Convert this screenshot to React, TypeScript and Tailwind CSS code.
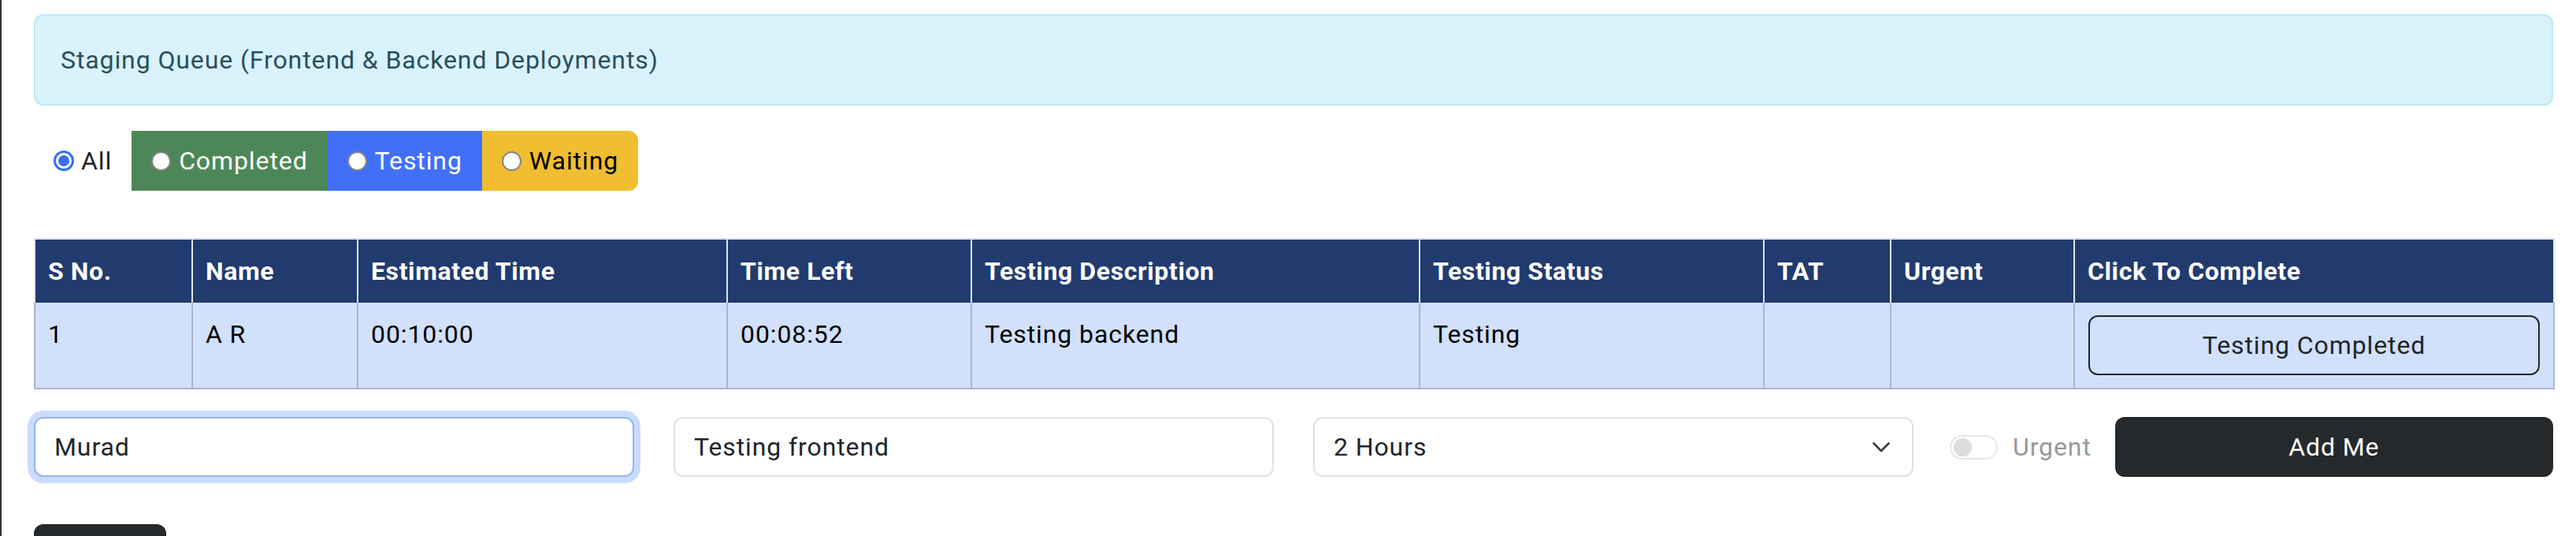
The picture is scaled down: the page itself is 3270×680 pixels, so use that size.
import React from "react";

const columns = [
  { title: "S No.", w: "w-[200px]" },
  { title: "Name", w: "w-[210px]" },
  { title: "Estimated Time", w: "w-[469px]" },
  { title: "Time Left", w: "w-[310px]" },
  { title: "Testing Description", w: "w-[569px]" },
  { title: "Testing Status", w: "w-[437px]" },
  { title: "TAT", w: "w-[161px]" },
  { title: "Urgent", w: "w-[233px]" },
  { title: "Click To Complete", w: "w-[609px]" },
];

const row = ["1", "A R", "00:10:00", "00:08:52", "Testing backend", "Testing", "", ""];

const Radio = ({ checked }: { checked?: boolean }) =>
  checked ? (
    <span className="flex size-[26px] shrink-0 items-center justify-center rounded-full border-[3px] border-[#3b6ef6] bg-white">
      <span className="size-[14px] rounded-full bg-[#3b6ef6]" />
    </span>
  ) : (
    <span className="size-[25px] shrink-0 rounded-full border-2 border-[#858585] bg-white" />
  );

const filters = [
  { label: "Completed", cls: "bg-[#4e8757] text-white" },
  { label: "Testing", cls: "bg-[#4170f7] text-white" },
  { label: "Waiting", cls: "bg-[#f0be2f] text-black rounded-r-[12px]" },
];

export default function App() {
  return (
    <div className="h-screen overflow-hidden border-l-2 border-[#333333] bg-white pl-[41px] pr-[29px] pt-[18px] font-[family-name:Roboto,sans-serif] text-[32px] leading-[48px] tracking-[0.9px] text-[#212529]">
      <div className="rounded-[12px] border-2 border-[#b9e9f7] bg-[#d9f2fb] px-[32px] py-[32px] text-[#2a4f5b]">
        Staging Queue (Frontend &amp; Backend Deployments)
      </div>

      <div className="mt-[32px] flex">
        <label className="flex h-[76px] items-center gap-[9px] px-[25px]">
          <Radio checked />
          All
        </label>
        {filters.map((f) => (
          <label
            key={f.label}
            className={`flex h-[76px] items-center gap-[10px] px-[25px] ${f.cls}`}
          >
            <Radio />
            {f.label}
          </label>
        ))}
      </div>

      <table className="mt-[60px] w-full table-fixed border-collapse border-t-2 border-[#dee2e6]">
        <thead>
          <tr className="bg-[#223b6e] text-white">
            {columns.map((c) => (
              <th
                key={c.title}
                className={`${c.w} border-x-2 border-[#dfe3ea] px-[16px] py-[16px] text-left font-bold tracking-[0.6px]`}
              >
                {c.title}
              </th>
            ))}
          </tr>
        </thead>
        <tbody>
          <tr className="bg-[#d1e0fb] text-black">
            {row.map((v, i) => (
              <td
                key={i}
                className="border-x-2 border-b-2 border-[#a9b5cd] px-[16px] py-[16px] align-top"
              >
                {v}
              </td>
            ))}
            <td className="border-x-2 border-b-2 border-[#a9b5cd] px-[17px] py-[16px] align-top">
              <button className="h-[76px] w-full rounded-[12px] border-2 border-[#212529] tracking-[0.9px] text-[#212529]">
                Testing Completed
              </button>
            </td>
          </tr>
        </tbody>
      </table>

      <div className="mt-[35px] grid grid-cols-[762px_762px_762px_1fr] gap-x-[50px]">
        <input
          readOnly
          value="Murad"
          className="h-[76px] rounded-[12px] border-2 border-[#93b5f8] bg-white px-[24px] tracking-[0.9px] text-[#212529] shadow-[0_0_0_8px_#cbdbfb] outline-none"
        />
        <input
          readOnly
          value="Testing frontend"
          className="h-[76px] rounded-[12px] border-2 border-[#dee2e6] bg-white px-[24px] tracking-[0.9px] text-[#212529] outline-none"
        />
        <div className="flex h-[76px] items-center justify-between rounded-[12px] border-2 border-[#dee2e6] bg-white pl-[24px] pr-[28px]">
          <span>2 Hours</span>
          <svg width="22" height="13" viewBox="0 0 22 13" fill="none">
            <path d="M1.5 1.5 11 11l9.5-9.5" stroke="#343a40" strokeWidth="2.6" strokeLinecap="round" strokeLinejoin="round" />
          </svg>
        </div>
        <div className="flex items-center">
          <span className="-ml-[4px] flex h-[31px] w-[61px] items-center rounded-full border-2 border-[#e6e6e6] bg-white pl-[3px]">
            <span className="size-[23px] rounded-full bg-[#dcdcdc]" />
          </span>
          <span className="ml-[19px] text-[#97999b]">Urgent</span>
          <button className="ml-[30px] h-[76px] flex-1 rounded-[12px] bg-[#26292c] tracking-[0.9px] text-white">
            Add Me
          </button>
        </div>
      </div>

      <button className="mt-[60px] h-[76px] w-[168px] rounded-[12px] bg-[#26292c]" />
    </div>
  );
}
